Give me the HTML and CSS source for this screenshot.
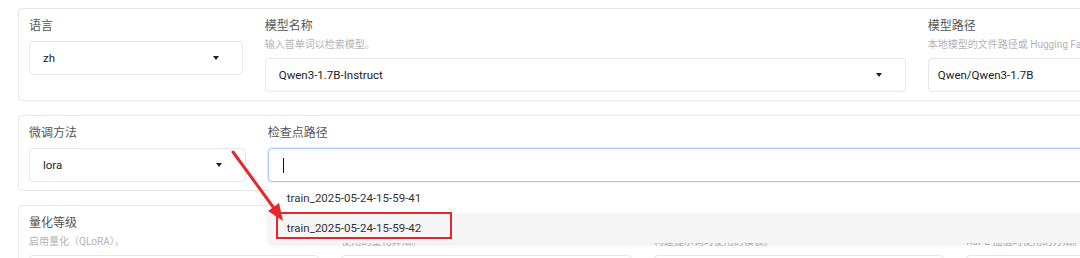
FILE: index.html
```html
<!DOCTYPE html>
<html lang="zh">
<head>
    <meta charset="UTF-8">
    <meta name="viewport" content="width=device-width, initial-scale=1.0">
    <title>LLaMA Board</title>
    <link rel="stylesheet" href="styles.css">
</head>
<body>
    <div class="page">
        <div class="block">
            <div class="field s1">
                <span class="label">语言</span>
                <div class="select"><span>zh</span><i class="caret"></i></div>
            </div>
            <div class="field s3">
                <span class="label">模型名称</span>
                <span class="info">输入首单词以检索模型。</span>
                <div class="select"><span>Qwen3-1.7B-Instruct</span><i class="caret"></i></div>
            </div>
            <div class="field s3">
                <span class="label">模型路径</span>
                <span class="info">本地模型的文件路径或 Hugging Face 的模型标识符。</span>
                <div class="select textbox"><span>Qwen/Qwen3-1.7B</span></div>
            </div>
        </div>

        <div class="block">
            <div class="field s1">
                <span class="label">微调方法</span>
                <div class="select"><span>lora</span><i class="caret"></i></div>
            </div>
            <div class="field s6">
                <span class="label">检查点路径</span>
                <div class="combo">
                    <div class="select focus"><span class="cursor"></span></div>
                    <ul class="options">
                        <li>train_2025-05-24-15-59-41</li>
                        <li class="active">train_2025-05-24-15-59-42</li>
                    </ul>
                    <span class="mark"></span>
                </div>
            </div>
        </div>

        <div class="block">
            <div class="field s1">
                <span class="label">量化等级</span>
                <span class="info">启用量化（QLoRA）。</span>
                <div class="select"><span>none</span><i class="caret"></i></div>
            </div>
            <div class="field s1">
                <span class="label">量化方法</span>
                <span class="info">使用的量化算法。</span>
                <div class="select"><span>bitsandbytes</span><i class="caret"></i></div>
            </div>
            <div class="field s1">
                <span class="label">对话模板</span>
                <span class="info">构建提示词时使用的模板。</span>
                <div class="select"><span>qwen3</span><i class="caret"></i></div>
            </div>
            <div class="field s1">
                <span class="label">RoPE 插值方法</span>
                <span class="info">RoPE 插值时使用的方法。</span>
                <div class="select"><span>none</span></div>
            </div>
            <div class="field s1">
                <span class="label">加速方式</span>
                <span class="info">使用的加速方法。</span>
                <div class="select"><span>auto</span></div>
            </div>
        </div>
    </div>

    <svg class="arrow" width="1080" height="258" viewBox="0 0 1080 258">
        <line x1="233" y1="152" x2="276" y2="211" stroke="#e8262a" stroke-width="3" stroke-linecap="round"/>
        <polygon points="283,221 268,211 279,203" fill="#e8262a"/>
    </svg>
</body>
</html>
```

FILE: styles.css
```css
* {
    margin: 0;
    padding: 0;
    box-sizing: border-box;
}

body {
    font-family: Roboto, "Noto Sans CJK SC", sans-serif;
    background: #ffffff;
    color: #222222;
    overflow: hidden;
    width: 1080px;
    height: 258px;
    position: relative;
}

.page {
    width: 1580px;
    padding: 8px 0 0 18px;
}

.block {
    display: flex;
    gap: 22px;
    background: #ffffff;
    border: 1px solid #e6e6e6;
    border-radius: 4px;
    padding: 10px 10px 8px;
    margin-bottom: 14px;
}

.field {
    display: flex;
    flex-direction: column;
    min-width: 0;
}

.s1 { flex: 1; }
.s3 { flex: 3; }
.s6 { flex: 6; }

.label {
    font-size: 12px;
    line-height: 14px;
    color: #555555;
    margin-bottom: 8px;
    white-space: nowrap;
}

.info {
    font-size: 10px;
    line-height: 14px;
    color: #b3b3b3;
    margin: -3px 0 6px;
    white-space: nowrap;
}

.select {
    height: 34px;
    border: 1px solid #e6e6e6;
    border-radius: 4px;
    background: #ffffff;
    padding: 0 23px 0 13px;
    display: flex;
    align-items: center;
    justify-content: space-between;
    font-size: 11.5px;
    color: #222222;
}

.textbox {
    padding-left: 9px;
}

.caret {
    width: 0;
    height: 0;
    border-left: 3.5px solid transparent;
    border-right: 3.5px solid transparent;
    border-top: 4px solid #222222;
}

.combo {
    position: relative;
    z-index: 10;
}

.focus {
    border-color: #a9cdf7;
    box-shadow: 0 0 0 1px rgba(169, 205, 247, 0.35);
}

.cursor {
    width: 1px;
    height: 15px;
    background: #111111;
    margin-left: 1px;
}

.options {
    position: absolute;
    top: 100%;
    left: 0;
    right: 0;
    list-style: none;
    background: #ffffff;
    border-top: 1px solid #f0f0f0;
    box-shadow: 0 2px 4px rgba(0, 0, 0, 0.08);
}

.options li {
    height: 30px;
    line-height: 30px;
    padding-left: 19px;
    font-size: 11.5px;
    color: #333333;
}

.options li.active {
    background: #f5f5f5;
}

.mark {
    position: absolute;
    left: 8px;
    top: 64px;
    width: 176px;
    height: 27px;
    border: 2px solid #e3262b;
}

.arrow {
    position: absolute;
    left: 0;
    top: 0;
    z-index: 20;
    pointer-events: none;
}
```
